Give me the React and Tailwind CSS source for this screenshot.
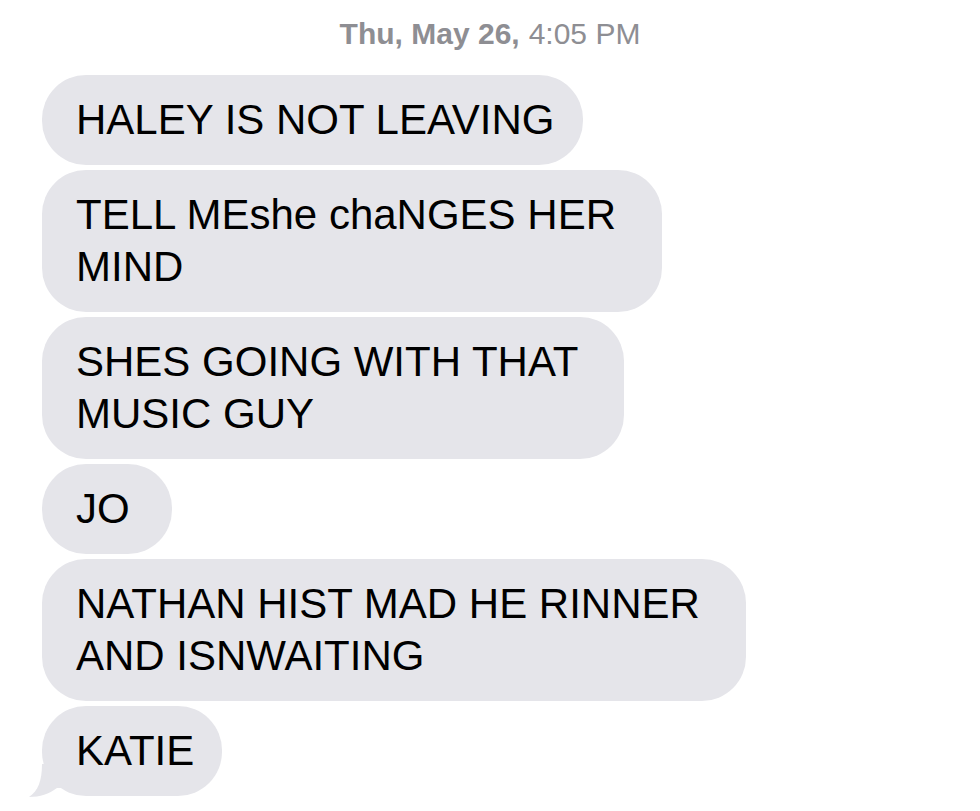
import React from "react";

const messages = [
  { id: 1, lines: ["HALEY IS NOT LEAVING"] },
  { id: 2, lines: ["TELL MEshe chaNGES HER", "MIND"] },
  { id: 3, lines: ["SHES GOING WITH THAT", "MUSIC GUY"] },
  { id: 4, lines: ["JO"] },
  { id: 5, lines: ["NATHAN HIST MAD HE RINNER", "AND ISNWAITING"] },
  { id: 6, lines: ["KATIE"], tail: true },
];

function Tail() {
  return (
    <svg
      className="absolute left-[-15px] bottom-[-2px]"
      width="50"
      height="34"
      viewBox="0 0 50 34"
    >
      <path
        d="M15 0 C15 17 11 27 2 33 C13 33 22 30 30 24 L50 24 L50 0 Z"
        fill="#e5e5ea"
      />
    </svg>
  );
}

function Bubble({ msg }) {
  const multi = msg.lines.length > 1;
  return (
    <div
      className={`relative w-fit min-w-[130px] rounded-[44px] bg-[#e5e5ea] pl-[34px] py-[19px] text-[42px] leading-[52px] text-black whitespace-nowrap ${
        multi ? "pr-[46px]" : "pr-[28px]"
      }`}
    >
      {msg.tail && <Tail />}
      <div className="relative">
        {msg.lines.map((line, i) => (
          <div key={i}>{line}</div>
        ))}
      </div>
    </div>
  );
}

export default function App() {
  return (
    <div className="min-h-screen w-[980px] h-[811px] overflow-hidden bg-white font-['Liberation_Sans',Arial,sans-serif]">
      {/* Timestamp */}
      <div className="h-[66px] flex items-center justify-center text-[30px] text-[#8e8e93]">
        <span className="font-bold">Thu, May 26,</span>
        <span className="ml-[9px]">4:05 PM</span>
      </div>

      {/* Messages */}
      <div className="mt-[9px] pl-[42px] flex flex-col gap-[5px]">
        {messages.map((msg) => (
          <Bubble key={msg.id} msg={msg} />
        ))}
      </div>
    </div>
  );
}
